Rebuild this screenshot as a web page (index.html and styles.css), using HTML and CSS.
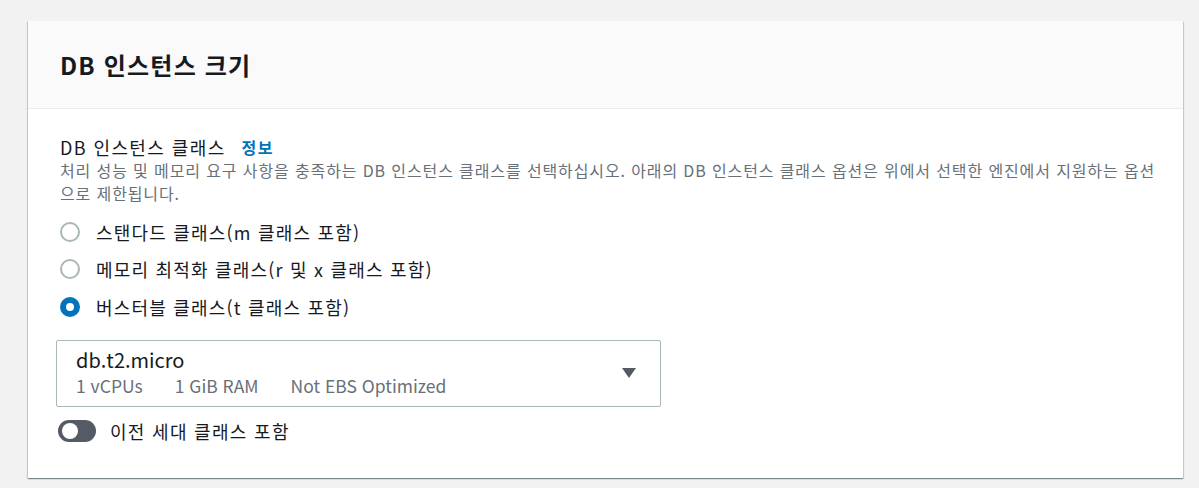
FILE: index.html
```html
<!DOCTYPE html>
<html lang="ko">
<head>
<meta charset="utf-8">
<link rel="stylesheet" href="styles.css">
</head>
<body>
<section class="card">
  <header class="card-header">
    <h2 class="card-title">DB 인스턴스 크기</h2>
  </header>
  <div class="card-body">
    <div class="field-label">
      <span>DB 인스턴스 클래스</span>
      <a class="info-link">정보</a>
    </div>
    <p class="field-desc">처리 성능 및 메모리 요구 사항을 충족하는 DB 인스턴스 클래스를 선택하십시오. 아래의 DB 인스턴스 클래스 옵션은 위에서 선택한 엔진에서 지원하는 옵션으로 제한됩니다.</p>
    <ul class="radio-list">
      <li class="radio-item"><span class="radio"></span><span class="radio-label">스탠다드 클래스(m 클래스 포함)</span></li>
      <li class="radio-item"><span class="radio"></span><span class="radio-label">메모리 최적화 클래스(r 및 x 클래스 포함)</span></li>
      <li class="radio-item"><span class="radio checked"></span><span class="radio-label">버스터블 클래스(t 클래스 포함)</span></li>
    </ul>
    <div class="select">
      <div class="select-text">
        <div class="select-value">db.t2.micro</div>
        <div class="select-tags"><span>1 vCPUs</span><span>1 GiB RAM</span><span>Not EBS Optimized</span></div>
      </div>
      <svg class="caret" width="16" height="12" viewBox="0 0 16 12"><path d="M1 1h14l-7 10z" fill="#545b64"/></svg>
    </div>
    <div class="toggle-row">
      <span class="toggle"><span class="knob"></span></span>
      <span class="toggle-label">이전 세대 클래스 포함</span>
    </div>
  </div>
</section>
</body>
</html>
```
FILE: styles.css
```css
html, body {
  margin: 0;
  padding: 0;
  background: #f2f2f2;
}
body {
  font-family: "Noto Sans CJK KR", "Noto Sans", sans-serif;
  color: #16191f;
  padding: 21px 16px 10px 28px;
}
.card {
  background: #fff;
  box-shadow: 0 1px 1px 0 rgba(0,28,36,.3), 1px 1px 1px 0 rgba(0,28,36,.15), -1px 1px 1px 0 rgba(0,28,36,.15);
}
.card-header {
  background: #fafafa;
  border-bottom: 1px solid #eaeded;
  height: 87px;
  display: flex;
  align-items: center;
  padding: 0 32px;
}
.card-title {
  margin: 0;
  font-size: 24px;
  letter-spacing: 1.2px;
  font-weight: 700;
  line-height: 1;
}
.card-body {
  padding: 26px 24px 34px 32px;
}
.field-label {
  font-size: 18px;
  letter-spacing: 1.4px;
  line-height: 24px;
  display: flex;
  gap: 16px;
}
.info-link {
  color: #0073bb;
  font-weight: 700;
  font-size: 16px;
}
.field-desc {
  margin: 0;
  font-size: 16px;
  letter-spacing: 0.88px;
  line-height: 23px;
  color: #687078;
}
.radio-list {
  list-style: none;
  margin: 8px 0 0;
  padding: 0;
}
.radio-item {
  display: flex;
  align-items: center;
  height: 37.5px;
}
.radio {
  width: 16px;
  height: 16px;
  border: 2px solid #aab7b8;
  border-radius: 50%;
  box-sizing: content-box;
  margin-right: 16px;
  flex: none;
}
.radio.checked {
  border: 6px solid #0073bb;
  width: 8px;
  height: 8px;
}
.radio-label {
  font-size: 18px;
  letter-spacing: 1.2px;
}
.select {
  margin: 14px 0 0 -4px;
  width: 605px;
  height: 67px;
  box-sizing: border-box;
  border: 1px solid #aab7b8;
  border-radius: 2px;
  display: flex;
  align-items: center;
  justify-content: space-between;
  padding: 0 23px 0 19px;
}
.select-value {
  font-size: 20px;
  line-height: 26px;
}
.select-tags {
  font-size: 17.5px;
  line-height: 26px;
  color: #687078;
  display: flex;
  gap: 32px;
}
.toggle-row {
  display: flex;
  align-items: center;
  margin-top: 11px;
  gap: 14px;
}
.toggle {
  width: 38px;
  height: 22px;
  border-radius: 11px;
  background: #545b64;
  margin-left: -2px;
  position: relative;
  flex: none;
}
.knob {
  position: absolute;
  left: 4px;
  top: 3px;
  width: 16px;
  height: 16px;
  border-radius: 50%;
  background: #fff;
}
.toggle-label {
  font-size: 18px;
  letter-spacing: 1.3px;
}
```
